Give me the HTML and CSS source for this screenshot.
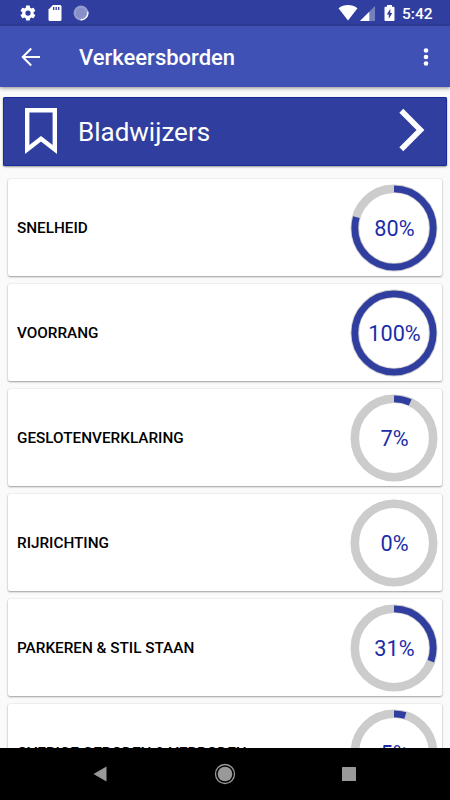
FILE: index.html
```html
<!DOCTYPE html>
<html lang="nl">
<head>
    <meta charset="UTF-8">
    <meta name="viewport" content="width=device-width, initial-scale=1.0">
    <title>Verkeersborden</title>
    <link rel="stylesheet" href="styles.css">
</head>
<body>
    <div class="statusbar">
        <svg class="gear" width="18" height="18" viewBox="0 0 24 24"><path d="M19.4 13c0-.3.1-.6.1-1s0-.7-.1-1l2.1-1.600c.2-.2.200-.4.100-.6l-2-3.500c-.1-.2-.4-.3-.6-.2l-2.500 1c-.5-.4-1.100-.7-1.700-1l-.4-2.600c0-.3-.2-.5-.5-.5h-4c-.2 0-.4.2-.5.4l-.4 2.700c-.6.2-1.100.6-1.700 1l-2.500-1c-.2-.1-.5 0-.6.2l-2 3.500c-.1.2-.1.500.1.600l2.100 1.600c0 .3-.1.600-.1 1s0 .7.1 1l-2.100 1.700c-.2.100-.2.400-.1.600l2 3.500c.1.200.4.300.6.200l2.500-1c.5.400 1.100.700 1.700 1l.4 2.600c0 .2.2.4.5.4h4c.2 0 .5-.2.5-.4l.4-2.600c.6-.3 1.200-.6 1.700-1l2.500 1c.2.100.5 0 .6-.2l2-3.500c.1-.2.1-.5-.1-.6zM12 15.500a3.500 3.500 0 1 1 0-7 3.500 3.500 0 0 1 0 7z"/></svg>
        <svg class="sdcard" width="14" height="16" viewBox="0 0 14 16">
            <path d="M5 0h7a1.500 1.500 0 0 1 1.500 1.500v13a1.500 1.500 0 0 1-1.500 1.500h-10a1.500 1.500 0 0 1-1.500-1.500v-10z"/>
            <path class="slots" d="M5.700 2v3M8.200 2v3M10.700 2v3"/>
        </svg>
        <svg class="spinner" width="16" height="16" viewBox="0 0 16 16">
            <circle class="disc" cx="8" cy="8" r="7.500"/>
            <circle class="dots" cx="8" cy="8" r="6"/>
            <path class="arc" d="M14.800 6.500a7 7 0 0 1-7.300 8.300"/>
        </svg>
        <span class="spacer"></span>
        <svg class="wifi" width="20" height="16" viewBox="0 0 20 16"><path d="M.5 3.300C6-1.100 14-1.100 19.500 3.300L10 15.500z"/></svg>
        <svg class="signal" width="15" height="15" viewBox="0 0 15 15">
            <path class="faint" d="M15 0v15H0z"/>
            <path d="M9.300 5.700v9.300H0z"/>
        </svg>
        <svg class="battery" width="11" height="16" viewBox="0 0 11 16">
            <path d="M3 0h5v1.700h1.500a1 1 0 0 1 1 1v12.300a1 1 0 0 1-1 1h-8a1 1 0 0 1-1-1v-12.300a1 1 0 0 1 1-1h1.500z"/>
            <path class="bolt" d="M6.300 3.700L2.800 9.500h2v4.300L8.300 8h-2z"/>
        </svg>
        <span class="clock">5:42</span>
    </div>
    <header class="appbar">
        <svg class="back" width="20" height="20" viewBox="0 0 20 20"><path d="M19 10H2M10.200 1.500L1.700 10l8.500 8.500"/></svg>
        <h1>Verkeersborden</h1>
        <svg class="more" width="6" height="20" viewBox="0 0 6 20">
            <circle cx="3" cy="3.500" r="2.300"/>
            <circle cx="3" cy="10" r="2.300"/>
            <circle cx="3" cy="16.500" r="2.300"/>
        </svg>
    </header>
    <main>
        <div class="bookmarks">
            <svg class="bookmark" width="32" height="48" viewBox="0 0 32 48"><path d="M2.200 2.200h27.600v39.200L16 30.700 2.200 41.400z"/></svg>
            <span class="bookmarks-title">Bladwijzers</span>
            <svg class="chevron" width="26" height="44" viewBox="0 0 26 44"><path d="M2.300 2.700L21.500 22 2.300 41.300"/></svg>
        </div>
        <div class="cards">
            <div class="card">
                <p>SNELHEID</p>
                <div class="ring">
                    <svg viewBox="0 0 88 88"><circle class="track" cx="44" cy="44" r="39.200"/><circle class="value" cx="44" cy="44" r="39.200" pathLength="100" stroke-dasharray="79.500 100"/></svg>
                    <span>80%</span>
                </div>
            </div>
            <div class="card">
                <p>VOORRANG</p>
                <div class="ring">
                    <svg viewBox="0 0 88 88"><circle class="track" cx="44" cy="44" r="39.200"/><circle class="value" cx="44" cy="44" r="39.200" pathLength="100" stroke-dasharray="100 0"/></svg>
                    <span>100%</span>
                </div>
            </div>
            <div class="card">
                <p>GESLOTENVERKLARING</p>
                <div class="ring">
                    <svg viewBox="0 0 88 88"><circle class="track" cx="44" cy="44" r="39.200"/><circle class="value" cx="44" cy="44" r="39.200" pathLength="100" stroke-dasharray="6.800 100"/></svg>
                    <span>7%</span>
                </div>
            </div>
            <div class="card">
                <p>RIJRICHTING</p>
                <div class="ring">
                    <svg viewBox="0 0 88 88"><circle class="track" cx="44" cy="44" r="39.200"/></svg>
                    <span>0%</span>
                </div>
            </div>
            <div class="card">
                <p>PARKEREN &amp; STIL STAAN</p>
                <div class="ring">
                    <svg viewBox="0 0 88 88"><circle class="track" cx="44" cy="44" r="39.200"/><circle class="value" cx="44" cy="44" r="39.200" pathLength="100" stroke-dasharray="30.500 100"/></svg>
                    <span>31%</span>
                </div>
            </div>
            <div class="card">
                <p>OVERIGE GEBODEN &amp; VERBODEN</p>
                <div class="ring">
                    <svg viewBox="0 0 88 88"><circle class="track" cx="44" cy="44" r="39.200"/><circle class="value" cx="44" cy="44" r="39.200" pathLength="100" stroke-dasharray="4.700 100"/></svg>
                    <span>5%</span>
                </div>
            </div>
        </div>
    </main>
    <nav class="navbar">
        <svg width="14" height="16" viewBox="0 0 14 16"><path d="M13.500.5v15L.5 8z"/></svg>
        <svg width="22" height="22" viewBox="0 0 22 22"><circle cx="11" cy="11" r="7.300"/><circle class="outline" cx="11" cy="11" r="9.500"/></svg>
        <svg width="14" height="14" viewBox="0 0 14 14"><rect width="14" height="14" rx=".5"/></svg>
    </nav>
</body>
</html>
```
FILE: styles.css
```css
* {
    margin: 0;
    padding: 0;
    box-sizing: border-box;
}
body {
    height: 800px;
    display: flex;
    flex-direction: column;
    overflow: hidden;
    font-family: Roboto, "Liberation Sans", sans-serif;
    background: #fafafa;
}
svg {
    display: block;
    flex-shrink: 0;
}

/* Status bar */

.statusbar {
    height: 26px;
    flex-shrink: 0;
    display: flex;
    align-items: center;
    padding: 0 17px 0 19px;
    background: #303f9f;
    color: #fff;
    fill: #fff;
}
.sdcard {
    margin-left: 11px;
}
.slots {
    stroke: #303f9f;
    stroke-width: 1.3;
}
.spinner {
    margin-left: 11px;
}
.disc {
    fill: #8790c8;
}
.dots {
    fill: none;
    stroke: #a9b0d9;
    stroke-width: 1.5;
    stroke-dasharray: 1 1;
}
.arc {
    fill: none;
    stroke: #fff;
    stroke-width: 1.2;
}
.spacer {
    flex: 1;
}
.signal {
    margin: 1px 0 0 2px;
}
.faint {
    fill: #7680bf;
}
.battery {
    margin-left: 9px;
}
.bolt {
    fill: #303f9f;
}
.clock {
    width: 31px;
    margin: 2px 0 0 7px;
    font-size: 15.5px;
    font-weight: 500;
    line-height: 20px;
    white-space: nowrap;
}

/* Title bar */

.appbar {
    height: 61px;
    flex-shrink: 0;
    display: flex;
    align-items: center;
    padding: 0 21px;
    background: #3f51b5;
    color: #fff;
    box-shadow: 0 1px 4px rgba(0, 0, 0, 0.45);
    z-index: 1;
}
.back {
    fill: none;
    stroke: #fff;
    stroke-width: 2;
}
h1 {
    flex: 1;
    margin: 3px 0 0 38px;
    font-size: 22px;
    font-weight: 500;
    line-height: 28px;
}
.more {
    fill: #fff;
}

/* Content */

main {
    flex: 1;
    min-height: 0;
    overflow: hidden;
    padding-top: 10px;
}
.bookmarks {
    height: 69px;
    display: flex;
    align-items: flex-start;
    margin: 0 3px;
    padding: 11px 22px 0;
    background: #303f9f;
    color: #fff;
    border-radius: 2px;
    box-shadow: 0 1px 2px rgba(0, 0, 0, 0.4), inset 0 0 0 1px #1b2a9b;
}
.bookmark {
    fill: none;
    stroke: #fff;
    stroke-width: 4.4;
}
.bookmarks-title {
    flex: 1;
    margin: 8px 0 0 21px;
    font-size: 26px;
    line-height: 32px;
}
.chevron {
    fill: none;
    stroke: #fff;
    stroke-width: 5.5;
}
.cards {
    display: flex;
    flex-direction: column;
    gap: 8px;
    padding: 13px 8px 0;
}
.card {
    height: 97px;
    flex-shrink: 0;
    display: flex;
    align-items: center;
    justify-content: space-between;
    padding: 0 4px 0 9px;
    background: #fff;
    border-radius: 2px;
    box-shadow: 0 1px 2px rgba(0, 0, 0, 0.35), 0 0 2px rgba(0, 0, 0, 0.12);
}
.card p {
    font-size: 15.3px;
    font-weight: 500;
    color: #000;
}
.ring {
    width: 88px;
    height: 88px;
    display: grid;
    place-items: center;
}
.ring svg,
.ring span {
    grid-area: 1 / 1;
}
.ring svg {
    width: 88px;
    height: 88px;
    transform: rotate(-90deg);
}
.ring span {
    padding: 1px 0 0 1px;
    font-size: 21.7px;
    color: #1c2daa;
    z-index: 1;
}
.track {
    fill: none;
    stroke: #ccc;
    stroke-width: 8.6;
}
.value {
    fill: none;
    stroke: #303f9f;
    stroke-width: 6.8;
}

/* Bottom navigation */

.navbar {
    height: 52px;
    flex-shrink: 0;
    display: flex;
    align-items: center;
    justify-content: space-between;
    padding: 0 94px 0 93px;
    background: #000;
    fill: #999;
    z-index: 1;
}
.outline {
    fill: none;
    stroke: #999;
    stroke-width: 1.3;
}
```
